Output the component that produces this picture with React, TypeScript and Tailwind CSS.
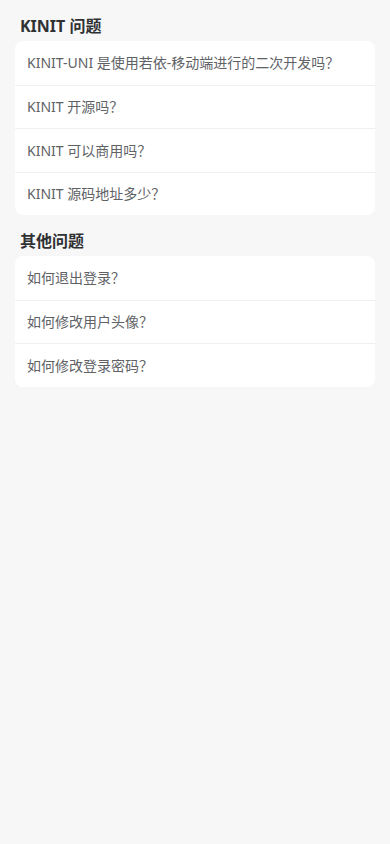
const SECTIONS = [
  {
    title: "KINIT 问题",
    items: ["KINIT-UNI 是使用若依-移动端进行的二次开发吗？", "KINIT 开源吗？", "KINIT 可以商用吗？", "KINIT 源码地址多少？"],
  },
  {
    title: "其他问题",
    items: ["如何退出登录？", "如何修改用户头像？", "如何修改登录密码？"],
  },
];

export default function App() {
  return (
    <div
      className="min-h-[844px] bg-[#f7f7f7] px-[15px] pt-[15px]"
      style={{ fontFamily: '"Noto Sans", "Noto Sans CJK SC", sans-serif' }}
    >
      {SECTIONS.map((s) => (
        <div key={s.title} className="mb-[15px]">
          <div className="h-[22px] px-[5px] text-[16px] font-bold leading-[22px] text-[#303133] mb-[4px]">{s.title}</div>
          <div className="overflow-hidden rounded-[8px] bg-white">
            {s.items.map((q, i) => (
              <div
                key={q}
                className={`flex h-[43.5px] items-center px-[12px] text-[14px] text-[#606266] ${i > 0 ? "border-t border-[#f0f0f0]" : ""}`}
              >
                {q}
              </div>
            ))}
          </div>
        </div>
      ))}
    </div>
  );
}
